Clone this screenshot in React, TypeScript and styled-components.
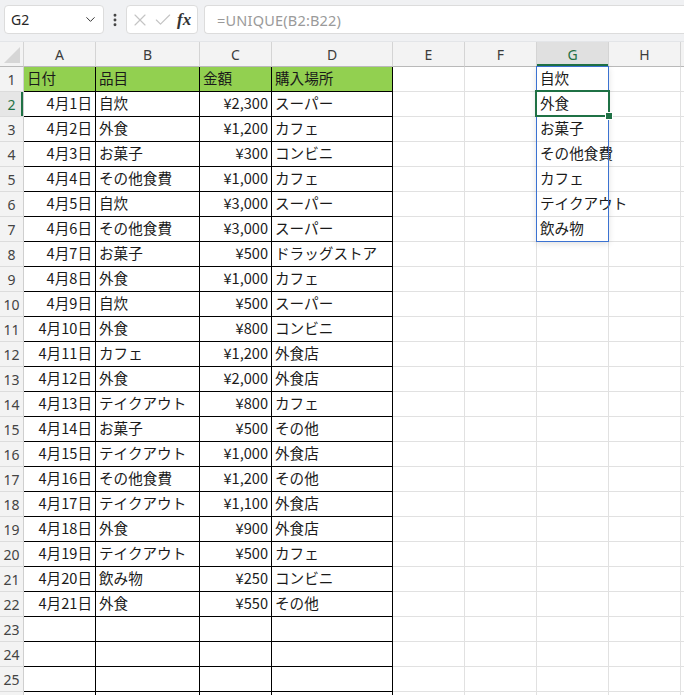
import React from "react";
import styled, { createGlobalStyle, css } from "styled-components";
import { ChevronDown, X, Check, EllipsisVertical } from "lucide-react";

const GREEN = "#1f7145";
const GRID = "#e1e1e1";

const GlobalStyle = createGlobalStyle`
  html, body {
    margin: 0;
    padding: 0;
    background: #ffffff;
    overflow: hidden;
  }
  body {
    font-family: "Noto Sans", "Noto Sans CJK JP", sans-serif;
  }
`;

const Page = styled.div`
  width: 684px;
  height: 695px;
  overflow: hidden;
  background: #ffffff;
`;

// Formula bar
const Toolbar = styled.div`
  height: 42px;
  box-sizing: border-box;
  background: #f0f1f3;
  border-bottom: 1px solid #e3e5e8;
  display: flex;
  align-items: flex-start;
  padding: 5px 0 0 4px;
`;

const NameBox = styled.div`
  width: 100px;
  height: 29px;
  box-sizing: border-box;
  background: #ffffff;
  border: 1px solid #dcdcdc;
  border-radius: 4px;
  display: flex;
  align-items: center;
  justify-content: space-between;
  padding: 0 5px 0 6px;
  font-size: 14px;
  color: #262626;
`;

const MoreButton = styled.div`
  width: 22px;
  height: 29px;
  display: flex;
  align-items: center;
  justify-content: center;
  color: #444;
`;

const FxButtons = styled.div`
  width: 72px;
  height: 29px;
  box-sizing: border-box;
  background: #ffffff;
  border: 1px solid #dcdcdc;
  border-radius: 4px;
  display: flex;
  align-items: center;
  gap: 3px;
  padding-left: 3px;
  color: #c4c4c4;
`;

const FxLabel = styled.span`
  font-family: "Liberation Serif", "DejaVu Serif", serif;
  font-style: italic;
  font-weight: 700;
  font-size: 17px;
  color: #333333;
  margin-left: 1px;
`;

const FormulaInput = styled.div`
  flex: 1;
  height: 29px;
  box-sizing: border-box;
  margin-left: 6px;
  background: #ffffff;
  border: 1px solid #dcdcdc;
  border-right: none;
  border-radius: 4px 0 0 4px;
  display: flex;
  align-items: center;
  padding-left: 12px;
  font-size: 14.5px;
  color: #9a9a9a;
  letter-spacing: 0.2px;
`;

// Grid
const Sheet = styled.div`
  position: relative;
  display: grid;
  grid-template-columns: 24px 72px 104px 72px 121px 72px 72px 72px 72px 1fr;
  grid-auto-rows: 25px;
`;

const Corner = styled.div`
  background: #f3f3f3;
  border-right: 1px solid #d4d4d4;
  border-bottom: 1px solid #b9b9b9;
  display: flex;
  align-items: flex-end;
  justify-content: flex-end;
  padding: 0 3px 3px 0;
`;

const ColHeader = styled.div<{ $active?: boolean }>`
  background: #f3f3f3;
  border-right: 1px solid #d4d4d4;
  border-bottom: 1px solid #b9b9b9;
  display: flex;
  align-items: center;
  justify-content: center;
  font-size: 14px;
  color: #3c3c3c;
  ${(p) =>
    p.$active &&
    css`
      background: #e0e0e0;
      color: ${GREEN};
      box-shadow: inset 0 -2px 0 ${GREEN};
    `}
`;

const RowHeader = styled.div<{ $active?: boolean }>`
  background: #f3f3f3;
  border-right: 1px solid #cfcfcf;
  border-bottom: 1px solid #dcdcdc;
  display: flex;
  align-items: center;
  justify-content: center;
  font-size: 14px;
  color: #444444;
  ${(p) =>
    p.$active &&
    css`
      background: #e6e6e6;
      color: ${GREEN};
      box-shadow: inset -2px 0 0 ${GREEN};
    `}
`;

const Cell = styled.div<{ $ruled?: boolean; $fill?: string; $right?: boolean }>`
  border-right: 1px solid ${(p) => (p.$ruled ? "#000000" : GRID)};
  border-bottom: 1px solid ${(p) => (p.$ruled ? "#000000" : GRID)};
  background: ${(p) => p.$fill || "transparent"};
  display: flex;
  align-items: center;
  justify-content: ${(p) => (p.$right ? "flex-end" : "flex-start")};
  padding: 0 3px 2px 3px;
  white-space: nowrap;
  overflow: visible;
  font-family: "Noto Sans CJK JP", "Noto Sans", sans-serif;
  font-size: 14.6px;
  line-height: 1;
  color: #1a1a1a;
  min-width: 0;
`;

const SpillRange = styled.div`
  position: absolute;
  left: 536px;
  top: 24px;
  width: 73px;
  height: 176px;
  box-sizing: border-box;
  border: 1px solid #3b72d1;
  box-shadow: 0 2px 6px rgba(0, 0, 0, 0.12);
  pointer-events: none;
`;

const ActiveCell = styled.div`
  position: absolute;
  left: 535px;
  top: 48px;
  width: 75px;
  height: 27px;
  box-sizing: border-box;
  border: 2px solid ${GREEN};
  pointer-events: none;
`;

const FillHandle = styled.div`
  position: absolute;
  right: -5px;
  bottom: -5px;
  width: 6px;
  height: 6px;
  background: ${GREEN};
  border: 1px solid #ffffff;
`;

const columns = ["A", "B", "C", "D", "E", "F", "G", "H", "I"];

const table: string[][] = [
  ["日付", "品目", "金額", "購入場所"],
  ["4月1日", "自炊", "¥2,300", "スーパー"],
  ["4月2日", "外食", "¥1,200", "カフェ"],
  ["4月3日", "お菓子", "¥300", "コンビニ"],
  ["4月4日", "その他食費", "¥1,000", "カフェ"],
  ["4月5日", "自炊", "¥3,000", "スーパー"],
  ["4月6日", "その他食費", "¥3,000", "スーパー"],
  ["4月7日", "お菓子", "¥500", "ドラッグストア"],
  ["4月8日", "外食", "¥1,000", "カフェ"],
  ["4月9日", "自炊", "¥500", "スーパー"],
  ["4月10日", "外食", "¥800", "コンビニ"],
  ["4月11日", "カフェ", "¥1,200", "外食店"],
  ["4月12日", "外食", "¥2,000", "外食店"],
  ["4月13日", "テイクアウト", "¥800", "カフェ"],
  ["4月14日", "お菓子", "¥500", "その他"],
  ["4月15日", "テイクアウト", "¥1,000", "外食店"],
  ["4月16日", "その他食費", "¥1,200", "その他"],
  ["4月17日", "テイクアウト", "¥1,100", "外食店"],
  ["4月18日", "外食", "¥900", "外食店"],
  ["4月19日", "テイクアウト", "¥500", "カフェ"],
  ["4月20日", "飲み物", "¥250", "コンビニ"],
  ["4月21日", "外食", "¥550", "その他"],
];

const unique = ["自炊", "外食", "お菓子", "その他食費", "カフェ", "テイクアウト", "飲み物"];

// 25 numbered rows fit the window; a 26th peeks in at the bottom edge
const ROWS = 26;
const LABELLED = 25;

export default function App() {
  const rows = Array.from({ length: ROWS }, (_, i) => i + 1);

  return (
    <Page>
      <GlobalStyle />
      <Toolbar>
        <NameBox>
          <span>G2</span>
          <ChevronDown size={15} strokeWidth={1.6} color="#333" />
        </NameBox>
        <MoreButton>
          <EllipsisVertical size={16} strokeWidth={2.4} />
        </MoreButton>
        <FxButtons>
          <X size={20} strokeWidth={1.4} />
          <Check size={20} strokeWidth={1.4} />
          <FxLabel>fx</FxLabel>
        </FxButtons>
        <FormulaInput>=UNIQUE(B2:B22)</FormulaInput>
      </Toolbar>

      <Sheet>
        <Corner>
          <svg width="16" height="16" viewBox="0 0 16 16">
            <polygon points="16,0 16,16 0,16" fill="#d6d6d6" />
          </svg>
        </Corner>
        {columns.map((c) => (
          <ColHeader key={c} $active={c === "G"}>
            {c === "I" ? "" : c}
          </ColHeader>
        ))}

        {rows.map((r) => {
          const data = table[r - 1];
          const head = r === 1 ? "#92d050" : undefined;
          return (
            <React.Fragment key={r}>
              <RowHeader $active={r === 2}>{r <= LABELLED ? r : ""}</RowHeader>
              <Cell $ruled $fill={head} $right={r > 1}>
                {data?.[0]}
              </Cell>
              <Cell $ruled $fill={head}>
                {data?.[1]}
              </Cell>
              <Cell $ruled $fill={head} $right={r > 1}>
                {data?.[2]}
              </Cell>
              <Cell $ruled $fill={head}>
                {data?.[3]}
              </Cell>
              <Cell />
              <Cell />
              <Cell>{unique[r - 1]}</Cell>
              <Cell />
              <Cell />
            </React.Fragment>
          );
        })}

        <SpillRange />
        <ActiveCell>
          <FillHandle />
        </ActiveCell>
      </Sheet>
    </Page>
  );
}
